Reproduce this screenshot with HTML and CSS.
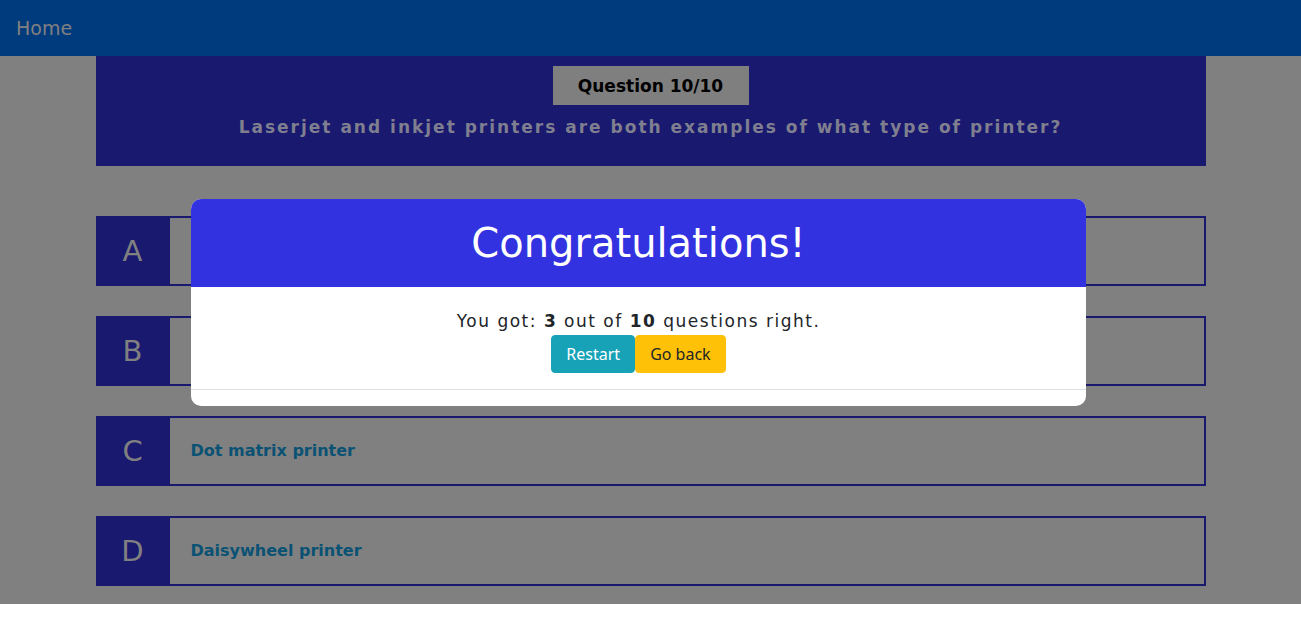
FILE: index.html
```html
<!DOCTYPE html>
<html lang="en">
<head>
<meta charset="utf-8">
<title>Quiz</title>
<link rel="stylesheet" href="styles.css">
</head>
<body>
<div class="page">
  <nav class="navbar"><a class="nav-link" href="#">Home</a></nav>
  <main class="container">
    <section class="question">
      <div class="badge">Question 10/10</div>
      <p class="question-text">Laserjet and inkjet printers are both examples of what type of printer?</p>
    </section>
    <div class="options">
      <div class="option"><div class="letter">A</div><div class="answer"></div></div>
      <div class="option"><div class="letter">B</div><div class="answer"></div></div>
      <div class="option"><div class="letter">C</div><div class="answer">Dot matrix printer</div></div>
      <div class="option"><div class="letter">D</div><div class="answer">Daisywheel printer</div></div>
    </div>
  </main>
  <div class="modal">
    <div class="modal-header">Congratulations!</div>
    <div class="modal-body">
      <p class="score">You got: <b>3</b> out of <b>10</b> questions right.</p>
      <div class="actions">
        <button class="btn btn-info">Restart</button><button class="btn btn-warning">Go back</button>
      </div>
    </div>
    <div class="modal-footer"></div>
  </div>
</div>
</body>
</html>
```

FILE: styles.css
```css
* { box-sizing: border-box; }
html, body { margin: 0; padding: 0; background: #fff; }
body { font-family: "DejaVu Sans", sans-serif; }

.page {
  position: relative;
  background: #808080;
  padding-bottom: 18px;
}

.navbar {
  height: 56px;
  background: #003b7e;
  display: flex;
  align-items: center;
  padding: 0 16px;
}
.nav-link {
  color: #808080;
  text-decoration: none;
  font-size: 19px;
}

.container {
  width: 1110px;
  margin: 0 auto;
}

.question {
  background: #191970;
  height: 110px;
  display: flex;
  flex-direction: column;
  align-items: center;
  padding-top: 10px;
}
.badge {
  background: #7f7f7f;
  color: #000;
  font-weight: bold;
  font-size: 17px;
  width: 196px;
  height: 39px;
  display: flex;
  align-items: center;
  justify-content: center;
}
.question-text {
  margin: 12px 0 0;
  color: #7f7f8f;
  font-weight: bold;
  font-size: 17px;
  letter-spacing: 2px;
}

.options {
  display: flex;
  flex-direction: column;
  gap: 30px;
  margin-top: 50px;
}
.option {
  height: 70px;
  border: 2px solid #191970;
  display: flex;
  align-items: stretch;
}
.letter {
  width: 74px;
  margin: -2px 0 -2px -2px;
  background: #191970;
  color: #808080;
  font-size: 29px;
  display: flex;
  align-items: center;
  justify-content: center;
}
.answer {
  display: flex;
  align-items: center;
  padding-left: 21px;
  padding-bottom: 2px;
  color: #0a5274;
  font-weight: bold;
  font-size: 16px;
}

.modal {
  position: absolute;
  left: 191px;
  top: 199px;
  width: 895px;
  background: #fff;
  border-radius: 10px;
  overflow: hidden;
}
.modal-header {
  height: 88px;
  background: #3232e0;
  color: #fff;
  font-size: 40px;
  display: flex;
  align-items: center;
  justify-content: center;
}
.modal-body {
  padding: 22px 16px 16px;
  display: flex;
  flex-direction: column;
  align-items: center;
  border-bottom: 1px solid #dee2e6;
}
.score {
  margin: 0;
  color: #212529;
  font-size: 17px;
  letter-spacing: 1.5px;
  line-height: 24px;
}
.score b { font-weight: bold; }
.actions { display: flex; margin-top: 2px; }
.btn {
  font-family: "Noto Sans", sans-serif;
  font-size: 16px;
  line-height: 24px;
  padding: 6px 14px;
  border: 1px solid transparent;
  border-radius: 4px;
  height: 38px;
  display: flex;
  align-items: center;
}
.btn-info { background: #17a2b8; color: #fff; border-color: #17a2b8; }
.btn-warning { background: #ffc107; color: #212529; border-color: #ffc107; }
.modal-footer { height: 16px; }
```
